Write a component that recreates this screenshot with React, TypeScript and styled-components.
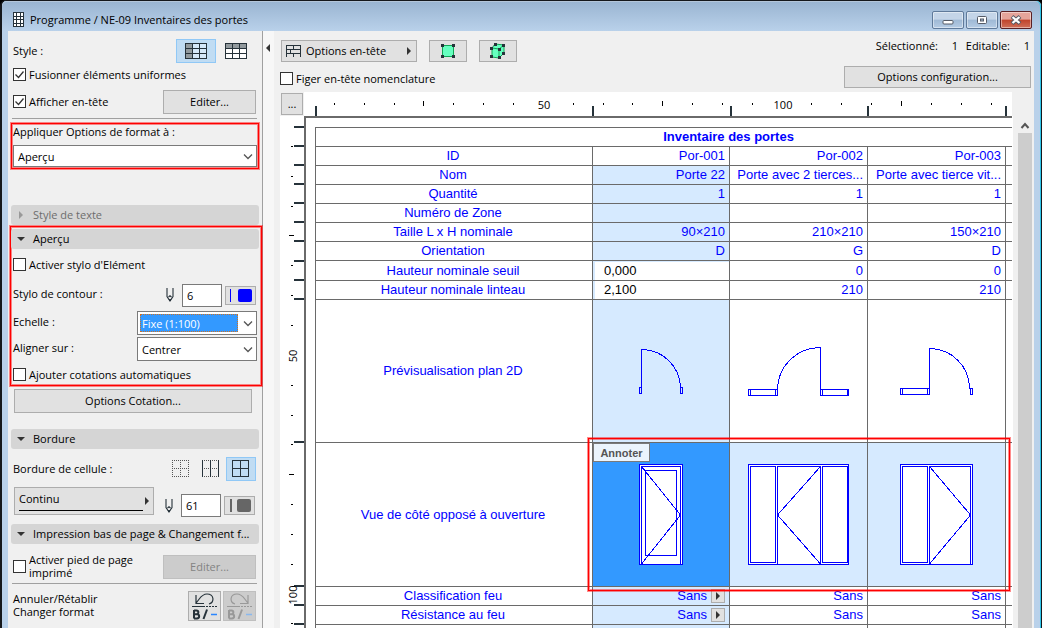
import React from "react";
import styled, { createGlobalStyle } from "styled-components";

const UI = `"Open Sans", "Noto Sans", sans-serif`;
const ARIAL = `"Liberation Sans", Arial, sans-serif`;
const BLUE = "#0000ff";
const INK = "#26323a";

const GlobalStyle = createGlobalStyle`
  * { box-sizing: border-box; }
  html, body { margin: 0; height: 100%; overflow: hidden; background: #000; }
  #root { height: 100%; }
  body, button, input, select { font-family: ${UI}; font-size: 11px; color: #000; }
  svg { display: block; flex: none; }
`;

/* ---------- window frame ---------- */
const Frame = styled.div`
  display: flex;
  flex-direction: column;
  height: 100vh;
  border: solid #15181c;
  border-width: 1px 1px 0 2px;
  border-radius: 6px 6px 0 0;
  background: #b9d1ea;
  box-shadow: inset -1px 0 0 #2fc6ea;
`;
const TitleBar = styled.header`
  display: flex;
  align-items: center;
  height: 30px;
  flex: none;
  padding: 8px 9px 0 10px;
  gap: 6px;
  border-radius: 5px 5px 0 0;
  background: linear-gradient(#99b4d1, #b9d1ea);
  box-shadow: inset -1px 0 0 #2fc6ea, inset 0 1px 0 #b4c6da;
`;
const TitleText = styled.h1`
  margin: 0;
  flex: 1;
  font-size: 11px;
  font-weight: 400;
  line-height: 16px;
`;
const WinButtons = styled.div`
  display: flex;
  gap: 2px;
`;
const WinButton = styled.button<{ $close?: boolean }>`
  display: flex;
  align-items: center;
  justify-content: center;
  width: 32px;
  height: 18px;
  padding: 0;
  border: 1px solid ${(p) => (p.$close ? "#5a2024" : "#5f7a9a")};
  border-radius: 2px;
  box-shadow: inset 0 0 0 1px rgba(255, 255, 255, 0.45);
  background: ${(p) =>
    p.$close
      ? "linear-gradient(#e5a49a 0 45%, #c0432b 50%, #d0705a)"
      : "linear-gradient(#c4d5e8 0 45%, #9fb9d5 50%, #b5cce4)"};
`;
const Body = styled.main`
  display: flex;
  flex: 1;
  min-height: 0;
  margin: 0 7px 0 6px;
  background: #f0f0f0;
  overflow: hidden;
`;

/* ---------- sidebar ---------- */
const Sidebar = styled.aside`
  display: flex;
  flex-direction: column;
  flex: none;
  width: 255px;
  padding: 8px 0 0;
  border-right: 1px solid #a0a0a0;
`;
const Row = styled.div<{ $top?: number; $h?: number; $end?: boolean }>`
  display: flex;
  flex: none;
  align-items: ${(p) => (p.$end ? "flex-end" : "center")};
  height: ${(p) => p.$h ?? 24}px;
  margin-top: ${(p) => p.$top ?? 0}px;
  padding: 0 6px 0 5px;
`;
const Grow = styled.span`
  flex: 1;
`;
const Text = styled.span`
  flex: 1;
  padding-bottom: 2px;
  line-height: 13px;
`;
const FieldLabel = styled.label`
  flex: 1;
  padding-bottom: 2px;
  line-height: 16px;
`;
const CheckLabel = styled.label<{ $narrow?: boolean }>`
  display: flex;
  align-items: center;
  gap: 3px;
  padding-bottom: 2px;
  line-height: 13px;
  ${(p) => p.$narrow && "width: 136px;"}
`;
const CheckBox = styled.input`
  appearance: none;
  flex: none;
  width: 13px;
  height: 13px;
  margin: 0;
  border: 1px solid #333;
  background: #fff;
  &:checked {
    background: #fff
      url("data:image/svg+xml,%3Csvg xmlns='http://www.w3.org/2000/svg' width='11' height='11'%3E%3Cpath d='M1.5 5.5l3 3 5-6' fill='none' stroke='%23333' stroke-width='1.3'/%3E%3C/svg%3E")
      center no-repeat;
  }
`;
const Button = styled.button<{ $w?: number }>`
  display: flex;
  align-items: center;
  justify-content: center;
  flex: none;
  width: ${(p) => (p.$w ? p.$w + "px" : "auto")};
  height: 24px;
  padding: 0;
  border: 1px solid #adadad;
  background: #e1e1e1;
  line-height: 16px;
  &:disabled {
    background: #cccccc;
    border-color: #bfbfbf;
    color: #838383;
  }
`;
const CotationButton = styled(Button)`
  margin: 3px 10px 0 6px;
`;
const Toggle = styled.button<{ $on?: boolean; $w: number }>`
  display: flex;
  align-items: center;
  justify-content: center;
  width: ${(p) => p.$w}px;
  height: 24px;
  padding: 0;
  border: 1px solid ${(p) => (p.$on ? "#90c8f6" : "transparent")};
  background: ${(p) => (p.$on ? "#c0dcf3" : "transparent")};
`;
const Rule = styled.hr<{ $top: number }>`
  width: 245px;
  height: 1px;
  flex: none;
  margin: ${(p) => p.$top}px 0 0 4px;
  border: 0;
  background: #a0a0a0;
`;
const redFrame = `
  border: 1px solid #ff0000;
  box-shadow: 0 0 0 1px rgba(255, 0, 0, 0.45), inset 0 0 0 1px rgba(255, 0, 0, 0.45);
`;
const FormatGroup = styled.section`
  ${redFrame}
  flex: none;
  margin: 4px 3px 0 3px;
  padding: 0 1px 1px;
`;
const FormatLabel = styled.label`
  display: block;
  height: 18px;
  margin-bottom: 3px;
  line-height: 16px;
`;
const PreviewGroup = styled.section`
  ${redFrame}
  flex: none;
  margin: 1px 0 0 2px;
  padding-top: 2px;
  & > ${Row} {
    padding: 0 4px 0 2px;
  }
`;
const Section = styled.button<{ $top: number; $inner?: boolean }>`
  display: flex;
  align-items: center;
  flex: none;
  gap: 8px;
  width: 248px;
  height: 20px;
  margin: ${(p) => p.$top}px 0 0 ${(p) => (p.$inner ? 0 : 3)}px;
  padding: 0 4px 0 6px;
  border: 0;
  border-radius: 3px;
  background: #d5d5d5;
  line-height: 16px;
  white-space: nowrap;
  &:disabled {
    color: #6d6d6d;
  }
`;
const Combo = styled.div<{ $w?: number; $h: number }>`
  display: flex;
  align-items: center;
  flex: none;
  width: ${(p) => (p.$w ? p.$w + "px" : "100%")};
  height: ${(p) => p.$h}px;
  padding: 0 3px 0 2px;
  border: 1px solid #7a7a7a;
  background: #fff;
`;
const Select = styled.select<{ $focus?: boolean }>`
  appearance: none;
  flex: 1;
  min-width: 0;
  height: 18px;
  margin-right: 5px;
  padding: 0 2px;
  border: 0;
  border-radius: 0;
  outline: ${(p) => (p.$focus ? "1px dotted #d07020" : "none")};
  outline-offset: -1px;
  background: ${(p) => (p.$focus ? "#3399ff" : "#fff")};
  color: ${(p) => (p.$focus ? "#fff" : "#000")};
`;
const PenGroup = styled.div`
  display: flex;
  align-items: center;
  height: 23px;
  margin-right: 1px;
`;
const PenField = styled.input`
  width: 40px;
  height: 23px;
  margin: 0 3px 0 8px;
  padding: 0 4px;
  border: 1px solid #7a7a7a;
  background: #fff;
`;
const PenButton = styled(Button)`
  height: 19px;
`;
const LineTypeButton = styled(Button)`
  align-self: flex-start;
  height: 28px;
  padding: 0 2px 0 4px;
  justify-content: space-between;
  margin-left: 1px;
`;
const LineSample = styled.span`
  width: 127px;
  padding-bottom: 4px;
  border-bottom: 1px solid #000;
  line-height: 14px;
  text-align: left;
`;
const IconButton = styled(Button)`
  height: 30px;
  margin-left: 2px;
`;
const Collapse = styled.button`
  display: flex;
  align-items: flex-start;
  flex: none;
  width: 11px;
  padding: 13px 0 0 1px;
  border: 0;
  background: #f7f7f7;
`;

/* ---------- schedule pane ---------- */
const Pane = styled.section`
  display: flex;
  flex-direction: column;
  flex: 1;
  min-width: 0;
`;
const Head = styled.div`
  display: flex;
  justify-content: space-between;
  flex: none;
  height: 61px;
  padding: 9px 3px 0 6px;
`;
const Tools = styled.div`
  display: flex;
  flex-direction: column;
  gap: 10px;
`;
const ToolRow = styled.div`
  display: flex;
  gap: 12px;
  padding-left: 1px;
`;
const ToolButton = styled(Button)`
  height: 22px;
`;
const HeaderButton = styled(ToolButton)`
  gap: 5px;
  padding: 0 3px 0 4px;
`;
const ButtonText = styled.span`
  flex: 1;
  text-align: left;
`;
const Status = styled.div`
  display: flex;
  flex-direction: column;
  align-items: flex-end;
  gap: 14px;
`;
const Counts = styled.div`
  display: flex;
  padding-right: 1px;
  line-height: 12px;
`;
const Count = styled.span<{ $w: number }>`
  width: ${(p) => p.$w}px;
  text-align: right;
`;
const Board = styled.div`
  display: grid;
  grid-template-columns: 24px minmax(0, 1fr) 22px;
  grid-template-rows: 24px minmax(0, 1fr);
  flex: 1;
  min-height: 0;
  padding-left: 6px;
`;
const Corner = styled(Button)`
  height: 22px;
  margin: 1px 1px 0;
`;
const RulerBox = styled.div`
  overflow: hidden;
  background: #fff;
`;
const Canvas = styled.div`
  position: relative;
  overflow: hidden;
  padding: 9px 0 0 9px;
  border: solid #6a6a6a;
  border-width: 2px 0 0 2px;
  background: #fff;
`;
const ScrollTrack = styled.div`
  display: flex;
  flex-direction: column;
  align-items: center;
  padding: 6px 3px 0 5px;
  border-left: 1px solid #fff;
`;
const ScrollThumb = styled.div`
  flex: 1;
  width: 14px;
  margin-top: 4px;
  background: #cdcdcd;
`;
const Sheet = styled.table`
  width: 828px;
  table-layout: fixed;
  border-collapse: collapse;
  font-family: ${ARIAL};
  font-size: 13px;
  line-height: 15px;
  color: ${BLUE};
`;
const Tr = styled.tr<{ $h?: number }>`
  height: ${(p) => p.$h ?? 19}px;
`;
const Caption = styled.th`
  padding: 0 2px 1px 0;
  border: 1px solid #6a6a6a;
`;
const Name = styled.th`
  padding: 0 2px 1px 0;
  border: 1px solid #6a6a6a;
  font-weight: 400;
  text-align: center;
`;
const Cell = styled.td<{ $tone?: "soft" | "strong"; $flush?: boolean }>`
  position: relative;
  padding: ${(p) => (p.$flush ? "0" : "0 4px 1px 6px")};
  border: 1px solid #6a6a6a;
  text-align: right;
  white-space: nowrap;
  background: ${(p) => (p.$tone === "strong" ? "#3399ff" : p.$tone === "soft" ? "#d6eaff" : "#fff")};
`;
const CellField = styled.input`
  display: block;
  width: 134px;
  height: 18px;
  margin-left: 2px;
  padding: 0 0 1px 9px;
  border: 0;
  background: #fff;
  font-family: ${ARIAL};
  font-size: 13px;
`;
const Choice = styled.span`
  display: flex;
  align-items: center;
  justify-content: flex-end;
  gap: 4px;
`;
const ChoiceButton = styled(Button)`
  width: 14px;
  height: 14px;
`;
const Note = styled.span`
  position: absolute;
  top: 0;
  left: 0;
  width: 57px;
  height: 19px;
  border: 1px solid #7a7a7a;
  background: #ebf4fd;
  font-size: 11px;
  font-weight: 700;
  line-height: 18px;
  text-align: center;
  color: #555;
`;
const RedMark = styled.div`
  ${redFrame}
  position: absolute;
  top: 320px;
  left: 282px;
  width: 422px;
  height: 153px;
`;

/* ---------- icons ---------- */
const Tri = ({ dir, color = "#333" }: { dir: "r" | "l" | "d"; color?: string }) => (
  <svg width="8" height="8" viewBox="0 0 8 8" fill={color}>
    <path d={dir === "r" ? "M2 0v8l4-4z" : dir === "l" ? "M6 0v8L2 4z" : "M0 2h8L4 6z"} />
  </svg>
);
const Chevron = ({ up }: { up?: boolean }) => (
  <svg width="10" height="7" viewBox="0 0 10 7" fill="none" stroke="#555" strokeWidth={up ? 2 : 1.3}>
    <path d={up ? "M1.5 6L5 2l3.500 4" : "M1 1.500l4 4 4-4"} />
  </svg>
);
const TitleIcon = () => (
  <svg width="12" height="16" viewBox="0 0 12 16" shapeRendering="crispEdges">
    <path d="M1 0h11v15H1z" fill="#26323a" />
    <path d="M2 1h2v3H2zM5 1h3v3H5zM9 1h2v3H9zM2 5h2v2H2zM5 5h3v2H5zM9 5h2v2H9zM2 8h2v3H2zM5 8h3v3H5zM9 8h2v3H9zM2 12h2v2H2zM5 12h3v2H5zM9 12h2v2H9z" fill="#fff" />
  </svg>
);
const GridIcon = ({ top }: { top?: boolean }) => (
  <svg width="22" height="16" viewBox="0 0 22 16" shapeRendering="crispEdges">
    <path d="M.5.500h21v15H.5z" fill={top ? "#fff" : "#d5e8f8"} />
    <path d={top ? "M0 0h22v5H0z" : "M0 0h8v16H0z"} fill="#929a9e" />
    <path d="M.5.500h21v15H.5zM7.500 0v16M14.500 0v16M0 5.500h22M0 10.500h22" fill="none" stroke={INK} />
  </svg>
);
const Pencil = () => (
  <svg width="8" height="14" viewBox="0 0 8 14" fill="none" stroke={INK}>
    <path d="M1 0v8.500L4 13l3-4.500V0M2.500 9L4 7.800 5.500 9" strokeWidth="1.1" />
    <path d="M3.200 11.500h1.600L4 13z" fill={INK} />
  </svg>
);
const PenSwatch = ({ color, w }: { color: string; w: number }) => (
  <svg width="23" height="13" viewBox="0 0 23 13">
    <path d={`M1 0h${w}v13H1z`} transform={`translate(${w - 1} 0)`} fill={color} shapeRendering="crispEdges" />
    <rect x="9" y="0" width="14" height="13" rx="2" fill={color} />
  </svg>
);
const BorderIcon = ({ kind }: { kind: "none" | "cols" | "all" }) => (
  <svg width="18" height="18" viewBox="0 0 18 18" fill="none" stroke={INK} shapeRendering="crispEdges">
    <path d="M0 .5h17M0 8.500h17M0 16.500h17" strokeDasharray={kind === "all" ? undefined : "1 1"} stroke={kind === "all" ? INK : "#555"} />
    <path d="M.5 0v17M8.500 0v17M16.500 0v17" strokeDasharray={kind === "none" ? "1 1" : undefined} stroke={kind === "none" ? "#555" : INK} />
  </svg>
);
const HeaderIcon = () => (
  <svg width="15" height="12" viewBox="0 0 15 12" fill="none" stroke={INK} shapeRendering="crispEdges">
    <path d="M.5 12V.5h14V12M0 4.500h15M0 8.500h15M7.500 1v4M4.500 5v4M7.500 9v3" />
  </svg>
);
const SquareIcon = () => (
  <svg width="14" height="14" viewBox="0 0 14 14" shapeRendering="crispEdges">
    <path d="M1.500 1.500h11v11h-11z" fill="#66ffc0" stroke="#11a555" />
    <path d="M0 0h3v3H0zM11 0h3v3h-3zM0 11h3v3H0zM11 11h3v3h-3z" fill={INK} />
  </svg>
);
const CubeIcon = () => (
  <svg width="16" height="16" viewBox="0 0 16 16">
    <path d="M2 5l3-4 9 1v8l-5 5-7-1z" fill="#66ffc0" stroke="#11a555" />
    <path d="M2 5l7 1 5-4M9 6v9" fill="none" stroke="#11a555" />
    <path d="M4 0h3v3H4zM12 1h3v3h-3zM0 4h3v3H0zM8 5h3v3H8zM12 9h3v3h-3zM0 12h3v3H0zM8 13h3v3H8z" fill={INK} />
  </svg>
);
const HistoryIcon = ({ redo }: { redo?: boolean }) => {
  const c = redo ? "#999" : INK;
  return (
    <svg width="27" height="28" viewBox="0 0 27 28" fill="none" stroke={c}>
      <path
        d={redo ? "M9 12C3 10 4 2 11 2c6 0 7 5 11 9M22 3v8.500h-8" : "M18 12c6-2 5-10-2-10C10 2 9 7 5 11M5 3v8.500h8"}
        strokeWidth="1.2"
      />
      <path d="M1 14.500h13" />
      <path d="M15 14.500h12" strokeDasharray="2 1" />
      <path d="M3 18v8.500M3 18.500h2.500a1.800 1.800 0 010 3.700H3m0 0h3a2 2 0 010 4.300H3" strokeWidth="2" />
      <path d="M16 17.500L12.500 27" strokeWidth="2" />
      <path d="M20 22.500h6" stroke={redo ? "#8ab8ee" : "#2a86ff"} strokeWidth="1.500" />
    </svg>
  );
};

/* ---------- rulers ---------- */
const STEP = 29.85;
const steps = Array.from({ length: 23 }, (_, i) => i + 1);
const COLS = [11, 288, 426, 563, 701];
const LINES = [10, 29, 48, 67, 86, 105, 124, 144, 163, 182, 325, 469, 488, 507];

const TopRuler = () => (
  <svg width="708" height="24" shapeRendering="crispEdges">
    {steps.filter((n) => n % 8).map((n) => (
      <rect key={n} x={Math.round(n * STEP)} y={n % 4 ? 11 : 9} width="1" height={n % 4 ? 2 : 5} />
    ))}
    {COLS.map((x) => (
      <rect key={x} x={x} y="14" width="2" height="10" fill={INK} />
    ))}
    {steps.filter((n) => n % 8 === 0).map((n) => (
      <text key={n} x={Math.round(n * STEP) + 1} y="17" fontSize="11" textAnchor="middle">
        {(n / 8) * 50}
      </text>
    ))}
  </svg>
);
const SideRuler = () => (
  <svg width="24" height="700" shapeRendering="crispEdges">
    {steps.filter((n) => n % 8).map((n) => (
      <rect key={n} x={n % 4 ? 11 : 9} y={Math.round(n * STEP)} width={n % 4 ? 2 : 5} height="1" />
    ))}
    {LINES.map((y) => (
      <rect key={y} x="14" y={y} width="10" height="2" fill={INK} />
    ))}
    {steps.filter((n) => n % 8 === 0).map((n) => {
      const y = Math.round(n * STEP) + 1;
      return (
        <text key={n} x="17" y={y} fontSize="11" textAnchor="middle" transform={`rotate(-90 17 ${y})`}>
          {(n / 8) * 50}
        </text>
      );
    })}
  </svg>
);

/* ---------- door drawings ---------- */
const Drawing = ({ h, children }: { h: number; children: React.ReactNode }) => (
  <svg width="136" height={h} fill="none" stroke={BLUE} shapeRendering="crispEdges">
    {children}
  </svg>
);
const planPaths = [
  "M46.500 87.500h2v6h-2zM48.500 94V49.500A39 39 0 0187.500 87.500M87.500 87.500h2v6h-2z",
  "M18.500 89.500h29v6h-29zM20.500 89v6M45.500 89v6M47.500 89.500A43 42 0 0190.500 47.500V96M90.500 89.500h28v6h-28zM92.500 89v6M117.500 89v6",
  "M32.500 88.500h29v6h-29zM34.500 88v6M59.500 88v6M61.500 95V48.500A40 40 0 01101.500 88.500M102.500 88.500h2v6h-2z",
];
const elevations = [
  ["M46.500 21.500h43v100h-43z", "M48.500 121V23.500h39V121M52.500 27.500h31v85h-31zM48.500 23.500l39 48.500-39 49"],
  ["M18.500 21.500h100v100h-100z", "M20.500 23.500h25v96h-25zM47.500 121V23.500h43V121M92.500 23.500h25v96h-25zM90.500 23.500L47.500 72l43 49"],
  ["M32.500 21.500h72v100h-72z", "M34.500 23.500h25v96h-25zM61.500 121V23.500h41V121M61.500 23.500l41 48.500-41 49"],
];

const rows: [string, string, string, string][] = [
  ["Nom", "Porte 22", "Porte avec 2 tierces...", "Porte avec tierce vit..."],
  ["Quantité", "1", "1", "1"],
  ["Numéro de Zone", "", "", ""],
  ["Taille L x H nominale", "90×210", "210×210", "150×210"],
  ["Orientation", "D", "G", "D"],
];
const editable: [string, string, string, string][] = [
  ["Hauteur nominale seuil", "0,000", "0", "0"],
  ["Hauteur nominale linteau", "2,100", "210", "210"],
];
const ratings = ["Classification feu", "Résistance au feu"];

const Schedule = () => (
  <Sheet>
    <colgroup>
      <col width="277" />
      <col width="137" />
      <col width="138" />
      <col width="138" />
      <col width="138" />
    </colgroup>
    <thead>
      <Tr>
        <Caption colSpan={5}>Inventaire des portes</Caption>
      </Tr>
    </thead>
    <tbody>
      <Tr>
        <Name scope="row">ID</Name>
        <Cell>Por-001</Cell>
        <Cell>Por-002</Cell>
        <Cell>Por-003</Cell>
        <Cell />
      </Tr>
      {rows.map(([name, a, b, c]) => (
        <Tr key={name}>
          <Name scope="row">{name}</Name>
          <Cell $tone="soft">{a}</Cell>
          <Cell>{b}</Cell>
          <Cell>{c}</Cell>
          <Cell />
        </Tr>
      ))}
      {editable.map(([name, a, b, c], i) => (
        <Tr key={name} $h={i ? 19 : 20}>
          <Name scope="row">{name}</Name>
          <Cell $tone="soft" $flush>
            <CellField aria-label={name} defaultValue={a} />
          </Cell>
          <Cell>{b}</Cell>
          <Cell>{c}</Cell>
          <Cell />
        </Tr>
      ))}
      <Tr $h={143}>
        <Name scope="row">Prévisualisation plan 2D</Name>
        {planPaths.map((d, i) => (
          <Cell key={d} $flush $tone={i ? undefined : "soft"}>
            <Drawing h={142}>
              <path d={d} />
            </Drawing>
          </Cell>
        ))}
        <Cell />
      </Tr>
      <Tr $h={144}>
        <Name scope="row">Vue de côté opposé à ouverture</Name>
        {elevations.map(([outer, inner], i) => (
          <Cell key={outer} $flush $tone={i ? "soft" : "strong"}>
            <Drawing h={143}>
              <path d={outer} fill="#fff" />
              <path d={inner} />
            </Drawing>
            {i === 0 && <Note>Annoter</Note>}
          </Cell>
        ))}
        <Cell />
      </Tr>
      {ratings.map((name) => (
        <Tr key={name}>
          <Name scope="row">{name}</Name>
          <Cell $tone="soft">
            <Choice>
              Sans
              <ChoiceButton aria-label={name}>
                <Tri dir="r" />
              </ChoiceButton>
            </Choice>
          </Cell>
          <Cell>Sans</Cell>
          <Cell>Sans</Cell>
          <Cell />
        </Tr>
      ))}
      <Tr>
        <Name />
        <Cell $tone="soft" />
        <Cell />
        <Cell />
        <Cell />
      </Tr>
    </tbody>
  </Sheet>
);

export default function App() {
  return (
    <>
      <GlobalStyle />
      <Frame>
        <TitleBar>
          <TitleIcon />
          <TitleText>Programme / NE-09 Inventaires des portes</TitleText>
          <WinButtons>
            <WinButton aria-label="Réduire">
              <svg width="12" height="12">
                <rect x="1" y="6.500" width="10" height="3.500" rx="1" fill="#fff" stroke="#555b66" />
              </svg>
            </WinButton>
            <WinButton aria-label="Agrandir">
              <svg width="12" height="12">
                <rect x="1.500" y="2.500" width="9" height="7" rx="1" fill="#fff" stroke="#555b66" />
                <rect x="4.500" y="5" width="3" height="2" fill="#9fb9d5" stroke="#555b66" />
              </svg>
            </WinButton>
            <WinButton $close aria-label="Fermer">
              <svg width="12" height="12" fill="none">
                <path d="M2 2.500l8 7M10 2.500l-8 7" stroke="#555b66" strokeWidth="4" />
                <path d="M2.500 3l7 6M9.500 3l-7 6" stroke="#fff" strokeWidth="2.200" />
              </svg>
            </WinButton>
          </WinButtons>
        </TitleBar>
        <Body>
          <Sidebar>
            <Row>
              <Text>Style :</Text>
              <Toggle $on $w={40} aria-label="Colonnes">
                <GridIcon />
              </Toggle>
              <Toggle $w={40} aria-label="Lignes">
                <GridIcon top />
              </Toggle>
            </Row>
            <Row>
              <CheckLabel>
                <CheckBox type="checkbox" defaultChecked />
                Fusionner éléments uniformes
              </CheckLabel>
            </Row>
            <Row $top={3}>
              <CheckLabel>
                <CheckBox type="checkbox" defaultChecked />
                Afficher en-tête
              </CheckLabel>
              <Grow />
              <Button $w={93}>Editer...</Button>
            </Row>
            <Rule $top={4} />
            <FormatGroup>
              <FormatLabel htmlFor="target">Appliquer Options de format à :</FormatLabel>
              <Combo $h={22}>
                <Select id="target">
                  <option>Aperçu</option>
                </Select>
                <Chevron />
              </Combo>
            </FormatGroup>
            <Section $top={36} disabled>
              <Tri dir="r" color="#999" />
              Style de texte
            </Section>
            <PreviewGroup>
              <Section $top={0} $inner>
                <Tri dir="d" />
                Aperçu
              </Section>
              <Row $top={4}>
                <CheckLabel>
                  <CheckBox type="checkbox" />
                  Activer stylo d'Elément
                </CheckLabel>
              </Row>
              <Row $top={6}>
                <FieldLabel htmlFor="contour">Stylo de contour :</FieldLabel>
                <PenGroup>
                  <Pencil />
                  <PenField id="contour" defaultValue="6" />
                  <PenButton $w={31} aria-label="Couleur du stylo">
                    <PenSwatch color={BLUE} w={1} />
                  </PenButton>
                </PenGroup>
              </Row>
              <Row $top={4}>
                <FieldLabel htmlFor="scale">Echelle :</FieldLabel>
                <Combo $w={120} $h={24}>
                  <Select id="scale" $focus>
                    <option>Fixe (1:100)</option>
                  </Select>
                  <Chevron />
                </Combo>
              </Row>
              <Row $top={2}>
                <FieldLabel htmlFor="align">Aligner sur :</FieldLabel>
                <Combo $w={120} $h={24}>
                  <Select id="align">
                    <option>Centrer</option>
                  </Select>
                  <Chevron />
                </Combo>
              </Row>
              <Row $top={4} $h={20}>
                <CheckLabel>
                  <CheckBox type="checkbox" />
                  Ajouter cotations automatiques
                </CheckLabel>
              </Row>
            </PreviewGroup>
            <CotationButton>Options Cotation...</CotationButton>
            <Section $top={16}>
              <Tri dir="d" />
              Bordure
            </Section>
            <Row $top={8}>
              <Text>Bordure de cellule :</Text>
              <Toggle $w={30} aria-label="Sans bordure">
                <BorderIcon kind="none" />
              </Toggle>
              <Toggle $w={30} aria-label="Bordures verticales">
                <BorderIcon kind="cols" />
              </Toggle>
              <Toggle $on $w={30} aria-label="Toutes les bordures">
                <BorderIcon kind="all" />
              </Toggle>
            </Row>
            <Row $top={6} $h={30} $end>
              <LineTypeButton $w={140}>
                <LineSample>Continu</LineSample>
                <Tri dir="r" />
              </LineTypeButton>
              <Grow />
              <PenGroup>
                <Pencil />
                <PenField aria-label="Stylo de bordure" defaultValue="61" />
                <PenButton $w={31} aria-label="Couleur de bordure">
                  <PenSwatch color="#666" w={2} />
                </PenButton>
              </PenGroup>
            </Row>
            <Section $top={7}>
              <Tri dir="d" />
              Impression bas de page &amp; Changement f...
            </Section>
            <Row $top={11}>
              <CheckLabel $narrow>
                <CheckBox type="checkbox" />
                <span>Activer pied de page imprimé</span>
              </CheckLabel>
              <Grow />
              <Button $w={93} disabled>
                Editer...
              </Button>
            </Row>
            <Rule $top={4} />
            <Row $top={7} $h={30}>
              <Text>
                Annuler/Rétablir
                <br />
                Changer format
              </Text>
              <IconButton $w={33} aria-label="Annuler">
                <HistoryIcon />
              </IconButton>
              <IconButton $w={33} disabled aria-label="Rétablir">
                <HistoryIcon redo />
              </IconButton>
            </Row>
          </Sidebar>
          <Collapse aria-label="Masquer le panneau">
            <Tri dir="l" />
          </Collapse>
          <Pane>
            <Head>
              <Tools>
                <ToolRow>
                  <HeaderButton $w={136}>
                    <HeaderIcon />
                    <ButtonText>Options en-tête</ButtonText>
                    <Tri dir="r" />
                  </HeaderButton>
                  <ToolButton $w={38} aria-label="Sélection 2D">
                    <SquareIcon />
                  </ToolButton>
                  <ToolButton $w={38} aria-label="Sélection 3D">
                    <CubeIcon />
                  </ToolButton>
                </ToolRow>
                <CheckLabel>
                  <CheckBox type="checkbox" />
                  Figer en-tête nomenclature
                </CheckLabel>
              </Tools>
              <Status>
                <Counts>
                  Sélectionné:
                  <Count $w={20}>1</Count>
                  <Count $w={52}>Editable:</Count>
                  <Count $w={20}>1</Count>
                </Counts>
                <ToolButton $w={187}>Options configuration...</ToolButton>
              </Status>
            </Head>
            <Board>
              <Corner>...</Corner>
              <RulerBox>
                <TopRuler />
              </RulerBox>
              <span />
              <RulerBox>
                <SideRuler />
              </RulerBox>
              <Canvas>
                <Schedule />
                <RedMark />
              </Canvas>
              <ScrollTrack>
                <Chevron up />
                <ScrollThumb />
              </ScrollTrack>
            </Board>
          </Pane>
        </Body>
      </Frame>
    </>
  );
}
